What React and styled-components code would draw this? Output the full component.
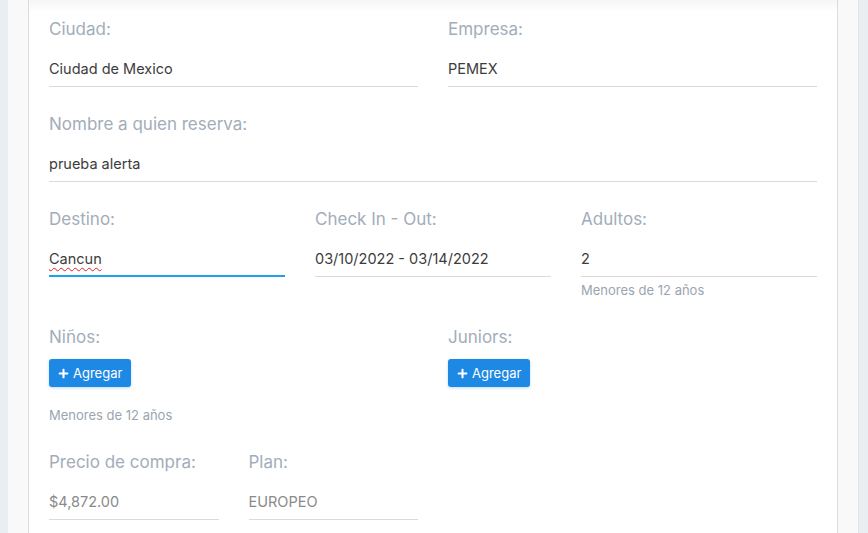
import React from 'react';
import styled, { createGlobalStyle } from 'styled-components';
import { FaPlus } from 'react-icons/fa';

const GlobalStyle = createGlobalStyle`
  html, body {
    margin: 0;
    padding: 0;
    overflow: hidden;
    background: #e9eef2;
  }
  body {
    font-family: Inter, "Noto Sans", sans-serif;
  }
`;

const App = () => {
  return (
    <>
      <GlobalStyle />
      <Page>
        <Card>
          <Row cols={2}>
            <Field label='Ciudad:' value='Ciudad de Mexico' />
            <Field label='Empresa:' value='PEMEX' />
          </Row>
          <Row cols={1}>
            <Field label='Nombre a quien reserva:' value='prueba alerta' />
          </Row>
          <Row cols={3}>
            <Field label='Destino:' value='Cancun' focused misspelled />
            <Field label='Check In - Out:' value='03/10/2022 - 03/14/2022' />
            <Field label='Adultos:' value='2' hint='Menores de 12 años' />
          </Row>
          <Row cols={2}>
            <FormGroup>
              <Label>Niños:</Label>
              <AddButton>
                <FaPlus size={11} />
                Agregar
              </AddButton>
              <Hint spaced>Menores de 12 años</Hint>
            </FormGroup>
            <FormGroup>
              <Label>Juniors:</Label>
              <AddButton>
                <FaPlus size={11} />
                Agregar
              </AddButton>
            </FormGroup>
          </Row>
          <Row cols={4}>
            <Field label='Precio de compra:' value='$4,872.00' disabled />
            <Field label='Plan:' value='EUROPEO' disabled />
          </Row>
        </Card>
      </Page>
    </>
  );
};

// read-only field: label, value line and optional hint below
const Field = ({ label, value, hint, focused, misspelled, disabled }) => (
  <FormGroup>
    <Label>{label}</Label>
    <InputBox focused={focused} $disabled={disabled}>
      <ValueText $misspelled={misspelled}>{value}</ValueText>
    </InputBox>
    {hint && <Hint>{hint}</Hint>}
  </FormGroup>
);

const Page = styled.div`
  margin: 0 9px 0 8px;
  padding: 0 20px;
  background: #f9f9f9;
  border-right: 1px solid #e6e6e6;
  min-height: 100vh;
`;
const Card = styled.div`
  background: linear-gradient(to bottom, #f6f6f6 0, #ffffff 12px);
  border-left: 1px solid #dcdcdc;
  border-right: 1px solid #dcdcdc;
  padding: 17px 20px 20px;
`;
const Row = styled.div`
  display: grid;
  grid-template-columns: repeat(${(p) => p.cols}, 1fr);
  column-gap: 30px;
`;
const FormGroup = styled.div`
  margin-bottom: 25px;
  min-width: 0;
`;
const Label = styled.div`
  font-size: 17px;
  line-height: 24px;
  color: #a2adb9;
  margin-bottom: 8px;
`;
const InputBox = styled.div`
  display: flex;
  align-items: center;
  box-sizing: border-box;
  height: 38px;
  padding-top: ${(p) => (p.focused ? '3px' : '2px')};
  border-bottom: ${(p) => (p.focused ? '2px solid #1e9ff2' : '1px solid #dadada')};
  font-size: 14.5px;
  color: ${(p) => (p.$disabled ? '#8a8a8a' : '#3c3c3c')};
  white-space: nowrap;
`;
const ValueText = styled.span`
  text-decoration: ${(p) => (p.$misspelled ? 'underline wavy #e02020' : 'none')};
  text-decoration-thickness: 1px;
  text-underline-offset: 3px;
`;
const Hint = styled.div`
  font-size: 13px;
  line-height: 20px;
  color: #9aa5b1;
  margin-top: ${(p) => (p.spaced ? '18px' : '3px')};
`;
const AddButton = styled.button`
  display: inline-flex;
  align-items: center;
  gap: 4px;
  margin-top: 2px;
  height: 28px;
  padding: 0 9px;
  border: none;
  border-radius: 3px;
  background: #1e88e5;
  box-shadow: 0 1px 3px rgba(30, 136, 229, 0.3);
  color: #ffffff;
  font-family: Inter, "Noto Sans", sans-serif;
  font-size: 13px;
  cursor: pointer;
`;

export default App;
